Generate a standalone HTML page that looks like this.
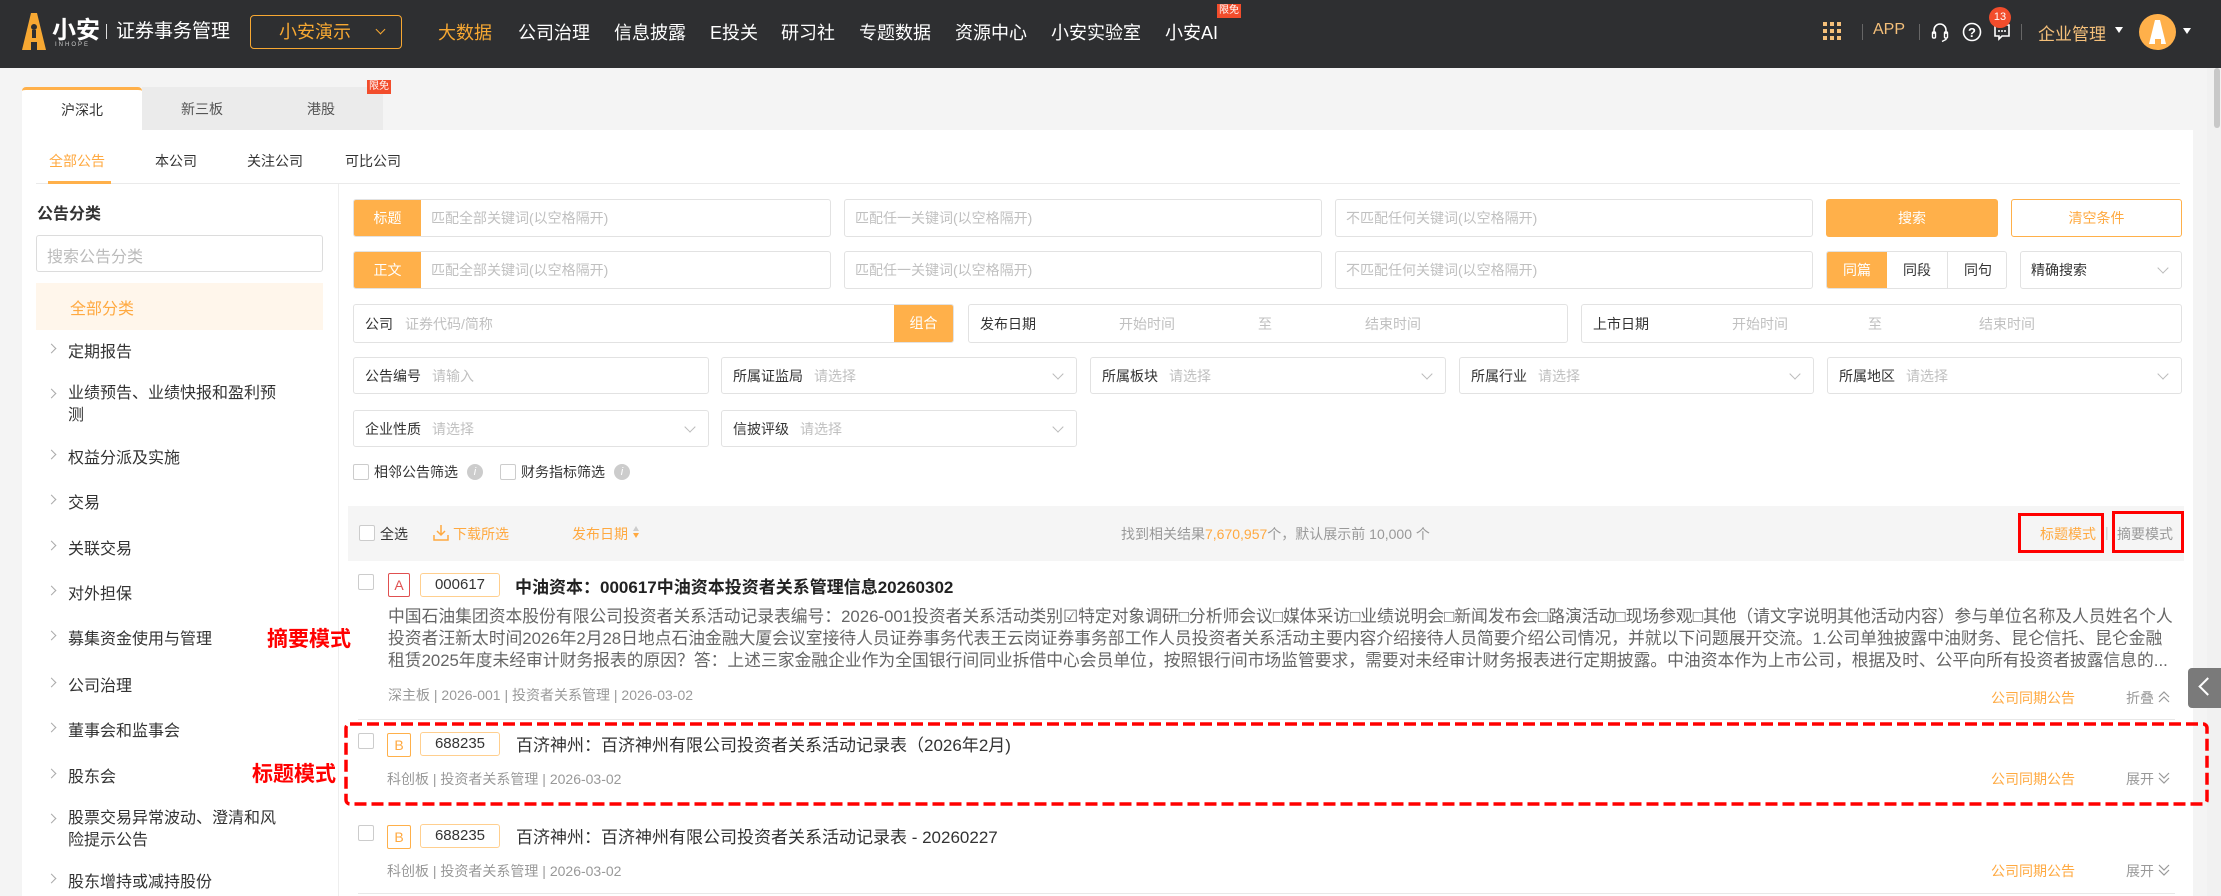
<!DOCTYPE html>
<html><head><meta charset="utf-8">
<style>
*{margin:0;padding:0;box-sizing:border-box}
body{width:2221px;height:896px;overflow:hidden;background:#f4f4f4;font-family:"Liberation Sans","Noto Sans CJK SC",sans-serif;position:relative;color:#333}
.a{position:absolute;white-space:nowrap}
.top{left:0;top:0;width:2221px;height:68px;background:#2e2f31}
.nav{top:20px;font-size:18px;color:#fff;line-height:26px}
.inp{position:absolute;border:1px solid #e2e2e2;border-radius:3px;background:#fff;font-size:14px;color:#c0c0c0}
.ph{position:absolute;top:50%;transform:translateY(-50%);white-space:nowrap}
.lab{color:#333}
.chev{position:absolute;right:14px;top:50%;width:8px;height:8px;border-right:1px solid #bbb;border-bottom:1px solid #bbb;transform:translateY(-75%) rotate(45deg)}
.side{font-size:16px;color:#333}
.arr{position:absolute;left:48px;width:7px;height:7px;border-right:1.5px solid #aaa;border-top:1.5px solid #aaa;transform:rotate(45deg)}
.cb{position:absolute;width:16px;height:16px;border:1px solid #ccc;border-radius:2px;background:#fff}
.meta{font-size:14px;color:#999}
.or{color:#ffa940}
</style></head><body>
<div class="a top"></div>
<svg class="a" style="left:22px;top:13px" width="24" height="37" viewBox="0 0 24 37"><path d="M9 0h6l9 37h-9v-8h-6v8H0z" fill="#f7a832"/><circle cx="12" cy="14" r="3" fill="#2e2f31"/><rect x="10" y="17" width="4" height="8" fill="#2e2f31"/></svg>
<div class="a" style="left:52px;top:17px;font-size:24px;font-weight:bold;color:#fff;line-height:28px">小安</div>
<div class="a" style="left:55px;top:42px;font-size:6px;color:#ccc;letter-spacing:2px">INHOPE</div>
<div class="a" style="left:106px;top:24px;width:1px;height:15px;background:#ddd"></div>
<div class="a" style="left:116px;top:19px;font-size:19px;color:#fff;line-height:26px">证券事务管理</div>
<div class="a" style="left:250px;top:15px;width:152px;height:34px;border:1px solid #f7a832;border-radius:4px"></div>
<div class="a" style="left:279px;top:19px;font-size:18px;color:#f7a832;line-height:26px">小安演示</div>
<div class="a" style="left:377px;top:26px;width:7px;height:7px;border-right:1px solid #f7a832;border-bottom:1px solid #f7a832;transform:rotate(45deg)"></div>
<div class="a nav" style="left:438px;color:#f7a832">大数据</div>
<div class="a nav" style="left:518px">公司治理</div>
<div class="a nav" style="left:614px">信息披露</div>
<div class="a nav" style="left:710px">E投关</div>
<div class="a nav" style="left:781px">研习社</div>
<div class="a nav" style="left:859px">专题数据</div>
<div class="a nav" style="left:955px">资源中心</div>
<div class="a nav" style="left:1051px">小安实验室</div>
<div class="a nav" style="left:1165px">小安AI</div>
<div class="a" style="left:1217px;top:4px;background:#f24d2c;color:#fff;font-size:10px;padding:1px 2px;line-height:12px">限免</div>
<svg class="a" style="left:1823px;top:22px" width="19" height="20"><g fill="#f5c07a"><rect x="0" y="0" width="4" height="4"/><rect x="7" y="0" width="4" height="4"/><rect x="14" y="0" width="4" height="4"/><rect x="0" y="7" width="4" height="4"/><rect x="7" y="7" width="4" height="4"/><rect x="14" y="7" width="4" height="4"/><rect x="0" y="14" width="4" height="4"/><rect x="7" y="14" width="4" height="4"/><rect x="14" y="14" width="4" height="4"/></g></svg>
<div class="a" style="left:1862px;top:24px;width:1px;height:16px;background:#666"></div>
<div class="a" style="left:1873px;top:21px;font-size:16px;color:#f5c07a">APP</div>
<div class="a" style="left:1919px;top:24px;width:1px;height:16px;background:#666"></div>
<svg class="a" style="left:1931px;top:21px" width="18" height="22" viewBox="0 0 18 22"><path d="M3 13V9a6 6 0 0 1 12 0v4" fill="none" stroke="#fff" stroke-width="1.6"/><rect x="1.5" y="11" width="3" height="6" rx="1" fill="none" stroke="#fff" stroke-width="1.4"/><rect x="13.5" y="11" width="3" height="6" rx="1" fill="none" stroke="#fff" stroke-width="1.4"/><path d="M15 17v1.5l-4 2" fill="none" stroke="#fff" stroke-width="1.4"/></svg>
<svg class="a" style="left:1962px;top:22px" width="20" height="20"><circle cx="10" cy="10" r="8.5" fill="none" stroke="#fff" stroke-width="1.6"/><text x="10" y="15" font-size="13" font-weight="bold" fill="#fff" text-anchor="middle" font-family="Liberation Sans">?</text></svg>
<svg class="a" style="left:1993px;top:23px" width="18" height="18"><path d="M2 2h14v11H9l-3 3v-3H2z" fill="none" stroke="#fff" stroke-width="1.6"/><g fill="#fff"><circle cx="6" cy="8" r="1"/><circle cx="9" cy="8" r="1"/><circle cx="12" cy="8" r="1"/></g></svg>
<div class="a" style="left:1989px;top:7px;width:22px;height:21px;border-radius:50%;background:#f24d2c;color:#fff;font-size:11px;text-align:center;line-height:21px">13</div>
<div class="a" style="left:2021px;top:24px;width:1px;height:16px;background:#666"></div>
<div class="a" style="left:2038px;top:20px;font-size:17px;color:#f5c07a">企业管理</div>
<div class="a" style="left:2115px;top:27px;border-left:4px solid transparent;border-right:4px solid transparent;border-top:6px solid #fff"></div>
<div class="a" style="left:2139px;top:14px;width:37px;height:36px;border-radius:50%;background:#ffb04a"></div>
<svg class="a" style="left:2148px;top:18px" width="19" height="28"><path d="M7 2h5l6 24h-5v-5h-6v5H1z" fill="#fff"/></svg>
<div class="a" style="left:2183px;top:28px;border-left:4px solid transparent;border-right:4px solid transparent;border-top:6px solid #fff"></div>
<div class="a" style="left:2207px;top:68px;width:14px;height:828px;background:#f1f1f1"></div>
<div class="a" style="left:2214px;top:68px;width:6px;height:60px;background:#c8c8c8;border-radius:3px"></div>
<div class="a" style="left:22px;top:87px;width:120px;height:44px;background:#fff;border-top:3px solid #ffb04a;border-radius:4px 4px 0 0;font-size:14px;text-align:center;line-height:40px;color:#333">沪深北</div>
<div class="a" style="left:142px;top:87px;width:241px;height:43px;background:#ebebeb"></div>
<div class="a" style="left:181px;top:99px;font-size:14px;color:#555">新三板</div>
<div class="a" style="left:307px;top:99px;font-size:14px;color:#555">港股</div>
<div class="a" style="left:367px;top:80px;background:#f24d2c;color:#fff;font-size:10px;padding:1px 2px;line-height:12px">限免</div>
<div class="a" style="left:22px;top:130px;width:2171px;height:766px;background:#fff"></div>
<div class="a" style="left:49px;top:151px;font-size:14px;color:#ffa940">全部公告</div>
<div class="a" style="left:155px;top:151px;font-size:14px;color:#333">本公司</div>
<div class="a" style="left:247px;top:151px;font-size:14px;color:#333">关注公司</div>
<div class="a" style="left:345px;top:151px;font-size:14px;color:#333">可比公司</div>
<div class="a" style="left:36px;top:183px;width:2144px;height:1px;background:#eaeaea"></div>
<div class="a" style="left:48px;top:181px;width:63px;height:3px;background:#ffb04a"></div>
<div class="a" style="left:338px;top:184px;width:1px;height:712px;background:#eee"></div>
<div class="a" style="left:37px;top:200px;font-size:16px;font-weight:bold;color:#333">公告分类</div>
<div class="a" style="left:36px;top:235px;width:287px;height:37px;border:1px solid #dcdcdc;border-radius:3px"></div>
<div class="a" style="left:47px;top:243px;font-size:16px;color:#bbb">搜索公告分类</div>
<div class="a" style="left:36px;top:283px;width:287px;height:47px;background:#fff6eb"></div>
<div class="a" style="left:70px;top:295px;font-size:16px;color:#ffa940">全部分类</div>
<div class="arr" style="top:345px"></div><div class="a side" style="left:68px;top:338px">定期报告</div>
<div class="arr" style="top:390px"></div><div class="a side" style="left:68px;top:383px;line-height:22px">业绩预告、业绩快报和盈利预<br>测</div>
<div class="arr" style="top:451px"></div><div class="a side" style="left:68px;top:444px">权益分派及实施</div>
<div class="arr" style="top:496px"></div><div class="a side" style="left:68px;top:489px">交易</div>
<div class="arr" style="top:542px"></div><div class="a side" style="left:68px;top:535px">关联交易</div>
<div class="arr" style="top:587px"></div><div class="a side" style="left:68px;top:580px">对外担保</div>
<div class="arr" style="top:632px"></div><div class="a side" style="left:68px;top:625px">募集资金使用与管理</div>
<div class="arr" style="top:679px"></div><div class="a side" style="left:68px;top:672px">公司治理</div>
<div class="arr" style="top:724px"></div><div class="a side" style="left:68px;top:717px">董事会和监事会</div>
<div class="arr" style="top:770px"></div><div class="a side" style="left:68px;top:763px">股东会</div>
<div class="arr" style="top:815px"></div><div class="a side" style="left:68px;top:808px;line-height:22px">股票交易异常波动、澄清和风<br>险提示公告</div>
<div class="arr" style="top:875px"></div><div class="a side" style="left:68px;top:868px">股东增持或减持股份</div>
<div class="a" style="left:267px;top:623px;font-size:21px;font-weight:bold;color:#f00">摘要模式</div>
<div class="a" style="left:252px;top:758px;font-size:21px;font-weight:bold;color:#f00">标题模式</div>
<div class="inp" style="left:353px;top:199px;width:478px;height:38px;overflow:hidden"><div class="a" style="left:0;top:0;width:67px;height:38px;background:#ffb04a;color:#fff;text-align:center;line-height:36px">标题</div><span class="ph" style="left:77px">匹配全部关键词(以空格隔开)</span></div>
<div class="inp" style="left:844px;top:199px;width:478px;height:38px"><span class="ph" style="left:10px">匹配任一关键词(以空格隔开)</span></div>
<div class="inp" style="left:1335px;top:199px;width:478px;height:38px"><span class="ph" style="left:10px">不匹配任何关键词(以空格隔开)</span></div>
<div class="a" style="left:1826px;top:199px;width:172px;height:38px;background:#ffb04a;border-radius:3px;color:#fff;font-size:14px;text-align:center;line-height:38px">搜索</div>
<div class="a" style="left:2011px;top:199px;width:171px;height:38px;border:1px solid #ffb04a;border-radius:3px;color:#ffa940;font-size:14px;text-align:center;line-height:36px">清空条件</div>
<div class="inp" style="left:353px;top:251px;width:478px;height:38px;overflow:hidden"><div class="a" style="left:0;top:0;width:67px;height:38px;background:#ffb04a;color:#fff;text-align:center;line-height:36px">正文</div><span class="ph" style="left:77px">匹配全部关键词(以空格隔开)</span></div>
<div class="inp" style="left:844px;top:251px;width:478px;height:38px"><span class="ph" style="left:10px">匹配任一关键词(以空格隔开)</span></div>
<div class="inp" style="left:1335px;top:251px;width:478px;height:38px"><span class="ph" style="left:10px">不匹配任何关键词(以空格隔开)</span></div>
<div class="inp" style="left:1826px;top:251px;width:181px;height:38px;overflow:hidden;color:#333"><div class="a" style="left:0;top:0;width:60px;height:38px;background:#ffb04a;color:#fff;text-align:center;line-height:36px">同篇</div><div class="a" style="left:60px;top:0;width:61px;height:38px;border-right:1px solid #e2e2e2;text-align:center;line-height:36px">同段</div><div class="a" style="left:121px;top:0;width:60px;text-align:center;line-height:36px">同句</div></div>
<div class="inp" style="left:2020px;top:251px;width:162px;height:38px;color:#333"><span class="ph" style="left:10px">精确搜索</span><div class="chev"></div></div>
<div class="inp" style="left:353px;top:304px;width:601px;height:39px;overflow:hidden"><span class="ph lab" style="left:11px">公司</span><span class="ph" style="left:51px">证券代码/简称</span><div class="a" style="right:0;top:0;width:59px;height:39px;background:#ffb04a;color:#fff;text-align:center;line-height:37px">组合</div></div>
<div class="inp" style="left:968px;top:304px;width:600px;height:39px"><span class="ph lab" style="left:11px">发布日期</span><span class="ph" style="left:150px">开始时间</span><span class="ph" style="left:289px">至</span><span class="ph" style="left:396px">结束时间</span></div>
<div class="inp" style="left:1581px;top:304px;width:601px;height:39px"><span class="ph lab" style="left:11px">上市日期</span><span class="ph" style="left:150px">开始时间</span><span class="ph" style="left:286px">至</span><span class="ph" style="left:397px">结束时间</span></div>
<div class="inp" style="left:353px;top:357px;width:356px;height:37px"><span class="ph lab" style="left:11px">公告编号</span><span class="ph" style="left:78px">请输入</span></div>
<div class="inp" style="left:721px;top:357px;width:356px;height:37px"><span class="ph lab" style="left:11px">所属证监局</span><span class="ph" style="left:92px">请选择</span><div class="chev"></div></div>
<div class="inp" style="left:1090px;top:357px;width:356px;height:37px"><span class="ph lab" style="left:11px">所属板块</span><span class="ph" style="left:78px">请选择</span><div class="chev"></div></div>
<div class="inp" style="left:1459px;top:357px;width:355px;height:37px"><span class="ph lab" style="left:11px">所属行业</span><span class="ph" style="left:78px">请选择</span><div class="chev"></div></div>
<div class="inp" style="left:1827px;top:357px;width:355px;height:37px"><span class="ph lab" style="left:11px">所属地区</span><span class="ph" style="left:78px">请选择</span><div class="chev"></div></div>
<div class="inp" style="left:353px;top:410px;width:356px;height:37px"><span class="ph lab" style="left:11px">企业性质</span><span class="ph" style="left:78px">请选择</span><div class="chev"></div></div>
<div class="inp" style="left:721px;top:410px;width:356px;height:37px"><span class="ph lab" style="left:11px">信披评级</span><span class="ph" style="left:78px">请选择</span><div class="chev"></div></div>
<div class="cb" style="left:353px;top:464px"></div>
<div class="a" style="left:374px;top:462px;font-size:14px">相邻公告筛选</div>
<div class="a" style="left:467px;top:464px;width:16px;height:16px;border-radius:50%;background:#ccc;color:#fff;font-size:11px;font-style:italic;text-align:center;line-height:16px">i</div>
<div class="cb" style="left:500px;top:464px"></div>
<div class="a" style="left:521px;top:462px;font-size:14px">财务指标筛选</div>
<div class="a" style="left:614px;top:464px;width:16px;height:16px;border-radius:50%;background:#ccc;color:#fff;font-size:11px;font-style:italic;text-align:center;line-height:16px">i</div>
<div class="a" style="left:348px;top:506px;width:1836px;height:55px;background:#f5f5f5"></div>
<div class="cb" style="left:359px;top:525px"></div>
<div class="a" style="left:380px;top:524px;font-size:14px">全选</div>
<svg class="a" style="left:433px;top:524px" width="16" height="17"><path d="M8 1v10M4 7l4 4 4-4M1 11v5h14v-5" fill="none" stroke="#ffa940" stroke-width="1.5"/></svg>
<div class="a or" style="left:453px;top:524px;font-size:14px">下载所选</div>
<div class="a or" style="left:572px;top:524px;font-size:14px">发布日期</div>
<div class="a" style="left:633px;top:526px;border-left:3px solid transparent;border-right:3px solid transparent;border-bottom:5px solid #ccc"></div>
<div class="a" style="left:633px;top:533px;border-left:3px solid transparent;border-right:3px solid transparent;border-top:5px solid #ffa940"></div>
<div class="a" style="left:1121px;top:524px;font-size:14px;color:#999">找到相关结果<span class="or">7,670,957</span>个，默认展示前 10,000 个</div>
<div class="a or" style="left:2040px;top:524px;font-size:14px">标题模式</div>
<div class="a" style="left:2105px;top:524px;font-size:14px;color:#ccc">|</div>
<div class="a" style="left:2117px;top:524px;font-size:14px;color:#999">摘要模式</div>
<div class="a" style="left:2018px;top:513px;width:86px;height:40px;border:3px solid #f00"></div>
<div class="a" style="left:2112px;top:511px;width:72px;height:42px;border:3px solid #f00"></div>
<div class="cb" style="left:358px;top:574px"></div>
<div class="a" style="left:388px;top:573px;width:22px;height:24px;border:1px solid #e05050;border-radius:2px;color:#e05050;font-size:14px;text-align:center;line-height:22px">A</div>
<div class="a" style="left:420px;top:573px;width:80px;height:24px;border:1px solid #ffcf8f;border-radius:3px;font-size:15px;text-align:center;line-height:22px">000617</div>
<div class="a" style="left:515px;top:573px;font-size:17px;font-weight:bold;color:#222">中油资本：000617中油资本投资者关系管理信息20260302</div>
<div class="a" style="left:388px;top:606px;width:1786px;font-size:16.8px;color:#666;line-height:22px;white-space:normal;overflow:hidden;height:66px;word-break:break-all">中国石油集团资本股份有限公司投资者关系活动记录表编号：2026-001投资者关系活动类别☑特定对象调研□分析师会议□媒体采访□业绩说明会□新闻发布会□路演活动□现场参观□其他（请文字说明其他活动内容）参与单位名称及人员姓名个人投资者汪新太时间2026年2月28日地点石油金融大厦会议室接待人员证券事务代表王云岗证券事务部工作人员投资者关系活动主要内容介绍接待人员简要介绍公司情况，并就以下问题展开交流。1.公司单独披露中油财务、昆仑信托、昆仑金融租赁2025年度未经审计财务报表的原因？答：上述三家金融企业作为全国银行间同业拆借中心会员单位，按照银行间市场监管要求，需要对未经审计财务报表进行定期披露。中油资本作为上市公司，根据及时、公平向所有投资者披露信息的...</div>
<div class="a meta" style="left:388px;top:685px">深主板 | 2026-001 | 投资者关系管理 | 2026-03-02</div>
<div class="a or" style="left:1991px;top:688px;font-size:14px">公司同期公告</div>
<div class="a meta" style="left:2126px;top:688px">折叠</div>
<svg class="a" style="left:2157px;top:690px" width="14" height="14"><path d="M2 7l5-5 5 5M2 12l5-5 5 5" fill="none" stroke="#999" stroke-width="1.2"/></svg>
<div class="a" style="left:358px;top:719px;width:1817px;height:1px;background:#e8e8e8"></div>
<div class="a" style="left:2188px;top:668px;width:33px;height:40px;background:#7a7a7a;border-radius:4px 0 0 4px"></div>
<div class="a" style="left:2201px;top:680px;width:13px;height:13px;border-left:2px solid #fff;border-bottom:2px solid #fff;transform:rotate(45deg)"></div>
<svg class="a" style="left:344px;top:722px" width="1865" height="84"><rect x="2" y="2" width="1861" height="80" rx="4" fill="none" stroke="#f00" stroke-width="3.5" stroke-dasharray="12 5"/></svg>
<div class="cb" style="left:358px;top:733px"></div>
<div class="a" style="left:387px;top:733px;width:24px;height:24px;border:1px solid #ffb04a;border-radius:2px;color:#ffa940;font-size:14px;text-align:center;line-height:22px">B</div>
<div class="a" style="left:420px;top:732px;width:80px;height:24px;border:1px solid #ffcf8f;border-radius:3px;font-size:15px;text-align:center;line-height:22px">688235</div>
<div class="a" style="left:516px;top:731px;font-size:17px;color:#333">百济神州：百济神州有限公司投资者关系活动记录表（2026年2月)</div>
<div class="a meta" style="left:387px;top:769px">科创板 | 投资者关系管理 | 2026-03-02</div>
<div class="a or" style="left:1991px;top:769px;font-size:14px">公司同期公告</div>
<div class="a meta" style="left:2126px;top:769px">展开</div>
<svg class="a" style="left:2157px;top:771px" width="14" height="14"><path d="M2 2l5 5 5-5M2 7l5 5 5-5" fill="none" stroke="#999" stroke-width="1.2"/></svg>
<div class="cb" style="left:358px;top:825px"></div>
<div class="a" style="left:387px;top:825px;width:24px;height:24px;border:1px solid #ffb04a;border-radius:2px;color:#ffa940;font-size:14px;text-align:center;line-height:22px">B</div>
<div class="a" style="left:420px;top:824px;width:80px;height:24px;border:1px solid #ffcf8f;border-radius:3px;font-size:15px;text-align:center;line-height:22px">688235</div>
<div class="a" style="left:516px;top:823px;font-size:17px;color:#333">百济神州：百济神州有限公司投资者关系活动记录表 - 20260227</div>
<div class="a meta" style="left:387px;top:861px">科创板 | 投资者关系管理 | 2026-03-02</div>
<div class="a or" style="left:1991px;top:861px;font-size:14px">公司同期公告</div>
<div class="a meta" style="left:2126px;top:861px">展开</div>
<svg class="a" style="left:2157px;top:863px" width="14" height="14"><path d="M2 2l5 5 5-5M2 7l5 5 5-5" fill="none" stroke="#999" stroke-width="1.2"/></svg>
<div class="a" style="left:358px;top:893px;width:1817px;height:1px;background:#e8e8e8"></div>
</body></html>
